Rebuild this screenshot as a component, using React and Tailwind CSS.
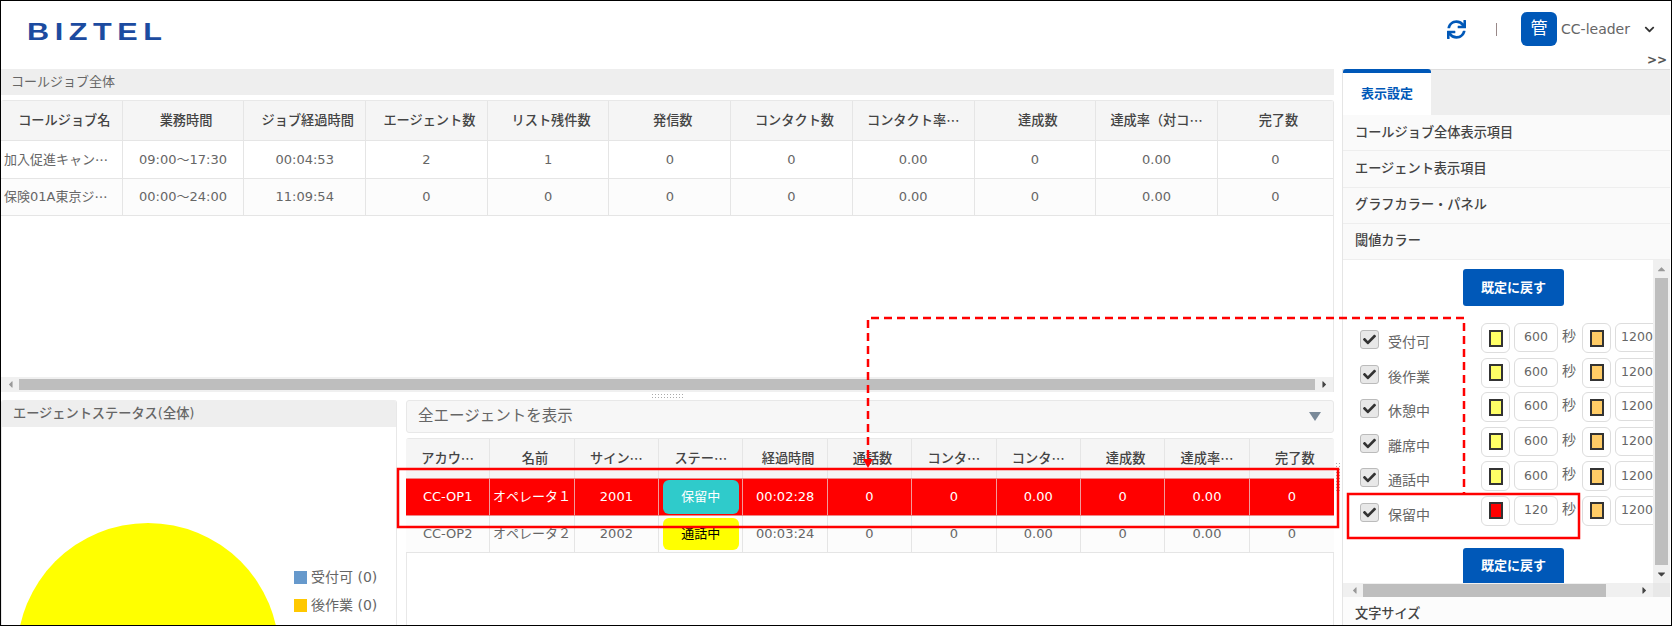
import { FaSync, FaChevronDown, FaCheck, FaCaretLeft, FaCaretRight, FaCaretUp, FaCaretDown } from 'react-icons/fa';

const jobHeaders = [
  { t: 'コールジョブ名' }, { t: '業務時間' }, { t: 'ジョブ経過時間' }, { t: 'エージェント数' }, { t: 'リスト残件数' }, { t: '発信数' },
  { t: 'コンタクト数' }, { t: 'コンタクト率', cut: true }, { t: '達成数' }, { t: '達成率（対コ', cut: true }, { t: '完了数' },
];

const jobRows = [
  { name: <>加入促進キャン<Dots /></>, bg: 'bg-white', cells: ['09:00～17:30', '00:04:53', '2', '1', '0', '0', '0.00', '0', '0.00', '0'] },
  { name: <>保険01A東京ジ<Dots /></>, bg: 'bg-[#fcfcfc]', cells: ['00:00～24:00', '11:09:54', '0', '0', '0', '0', '0.00', '0', '0.00', '0'] },
];

const agentHeaders = [
  { t: 'アカウ', cut: true }, { t: '名前' }, { t: 'サイン', cut: true }, { t: 'ステー', cut: true }, { t: '経過時間' }, { t: '通話数' },
  { t: 'コンタ', cut: true }, { t: 'コンタ', cut: true }, { t: '達成数' }, { t: '達成率', cut: true }, { t: '完了数' },
];

const settingItems = ['コールジョブ全体表示項目', 'エージェント表示項目', 'グラフカラー・パネル', '閾値カラー'];

const thresholds = [
  { label: '受付可', color: 'bg-[#ffff66]', secs: '600' },
  { label: '後作業', color: 'bg-[#ffff66]', secs: '600' },
  { label: '休憩中', color: 'bg-[#ffff66]', secs: '600' },
  { label: '離席中', color: 'bg-[#ffff66]', secs: '600' },
  { label: '通話中', color: 'bg-[#ffff66]', secs: '600' },
  { label: '保留中', color: 'bg-[#ff0000]', secs: '120' },
];

function Dots() {
  return <span className="font-['Noto_Sans_CJK_JP']">…</span>;
}

function HeaderCell({ h }) {
  return (
    <div className={`flex items-center justify-center border-r border-[#e5e5e5] text-[13.2px] font-medium whitespace-nowrap text-[#444] last:border-r-0 ${h.cut ? '' : 'pl-[6px]'}`}>
      {h.t}{h.cut && <Dots />}
    </div>
  );
}

function Swatch({ color }) {
  return (
    <div className="flex h-[30px] w-[29px] shrink-0 items-center justify-center rounded-md border border-[#ddd] bg-white">
      <div className={`h-[17px] w-[14px] border-2 border-[#333] ${color}`} />
    </div>
  );
}

function SecInput({ value, className }) {
  return (
    <div className={`flex h-[29px] shrink-0 items-center justify-center rounded-md border border-[#ddd] bg-white text-[12.5px] text-[#666] ${className}`}>
      {value}
    </div>
  );
}

function ThresholdRow({ row }) {
  return (
    <div className="flex h-[34.6px] shrink-0 items-start">
      <div className="mt-[7px] flex h-[19px] w-[19px] shrink-0 items-center justify-center rounded-[3px] border border-[#bbb] bg-[#e8e8e8] text-[#333]">
        <FaCheck size={13} />
      </div>
      <div className="mt-[9px] ml-[9px] w-[93px] shrink-0 text-[14px] text-[#666]">{row.label}</div>
      <Swatch color={row.color} />
      <SecInput value={row.secs} className="ml-[4px] w-[44px]" />
      <div className="ml-[4px] w-[16px] shrink-0 text-[14px] leading-[26px] text-[#666]">秒</div>
      <div className="ml-[4px]"><Swatch color="bg-[#ffcc66]" /></div>
      <SecInput value="1200" className="ml-[4px] w-[44px]" />
    </div>
  );
}

function JobTable() {
  return (
    <div className="mt-[5px] flex h-[292px] flex-col rounded-t-[3px] border-t border-r border-[#e8e8e8] bg-white">
      <div className="grid h-[40px] grid-cols-[repeat(10,121.7px)_1fr] border-b border-[#e5e5e5] bg-[#f5f5f5]">
        {jobHeaders.map((h, i) => <HeaderCell key={i} h={h} />)}
      </div>
      {jobRows.map((row, i) => (
        <div key={i} className={`grid h-[37.5px] grid-cols-[repeat(10,121.7px)_1fr] border-b border-[#e5e5e5] ${row.bg}`}>
          <div className="flex items-center overflow-hidden border-r border-[#e5e5e5] pl-[3px] text-[13px] whitespace-nowrap text-[#666]">{row.name}</div>
          {row.cells.map((c, j) => (
            <div key={j} className="flex items-center justify-center border-r border-[#e5e5e5] text-[13px] text-[#666] last:border-r-0">{c}</div>
          ))}
        </div>
      ))}
      <div className="flex-1" />
      <div className="flex h-[15px] items-center bg-[#f0f0f0] text-[#666]">
        <div className="flex w-[18px] shrink-0 justify-center"><FaCaretLeft size={11} color="#999" /></div>
        <div className="h-[11px] flex-1 bg-[#bebebe]" />
        <div className="flex w-[18px] shrink-0 justify-center"><FaCaretRight size={11} color="#444" /></div>
      </div>
    </div>
  );
}

function AgentTable() {
  const cols = ['CC-OP1', 'オペレータ１', '2001', null, '00:02:28', '0', '0', '0.00', '0', '0.00', '0'];
  const cols2 = ['CC-OP2', 'オペレータ２', '2002', null, '00:03:24', '0', '0', '0.00', '0', '0.00', '0'];
  return (
    <div className="mt-[5px] flex-1 rounded-t-[3px] border-t border-[#e8e8e8] bg-white shadow-[inset_1px_0_0_#e8e8e8,inset_-1px_0_0_#e8e8e8]">
      <div className="grid h-[39px] grid-cols-11 bg-[#f5f5f5]">
        {agentHeaders.map((h, i) => <HeaderCell key={i} h={h} />)}
      </div>
      <div className="grid h-[38px] grid-cols-11 border-y border-[#e88] bg-[#ff0000]">
        {cols.map((c, i) => (
          <div key={i} className="flex items-center justify-center border-r border-[#f29a9a] text-[13px] whitespace-nowrap text-white last:border-r-0">
            {c ?? <div className="flex h-[34px] w-[76px] items-center justify-center rounded-md bg-[#2fcbcb]">保留中</div>}
          </div>
        ))}
      </div>
      <div className="grid h-[37px] grid-cols-11 border-b border-[#e5e5e5] bg-[#fcfcfc]">
        {cols2.map((c, i) => (
          <div key={i} className="flex items-center justify-center border-r border-[#e5e5e5] text-[13px] whitespace-nowrap text-[#666] last:border-r-0">
            {c ?? <div className="flex h-[32px] w-[76px] items-center justify-center rounded-md bg-[#ffff00] text-black">通話中</div>}
          </div>
        ))}
      </div>
    </div>
  );
}

function SettingsPanel() {
  return (
    <div className="flex w-[328px] shrink-0 flex-col border-l border-[#e5e5e5]">
      <div className="flex h-[46px] shrink-0 border-t border-[#ddd] bg-[#eee]">
        <div className="-mt-px flex w-[88px] items-center justify-center rounded-t-[3px] border-t-4 border-[#0058b8] bg-white text-[13px] font-bold text-[#0058b8]">
          表示設定
        </div>
      </div>
      {settingItems.map((item) => (
        <div key={item} className="flex h-[36.25px] shrink-0 items-center border-b border-[#eee] bg-[#fafafa] pl-[12px] text-[13.2px] font-medium text-[#444]">
          {item}
        </div>
      ))}
      <div className="flex h-[337px] shrink-0 flex-col">
        <div className="flex min-h-0 flex-1">
          <div className="min-w-0 flex-1 overflow-hidden pl-[17px]">
            <button className="mt-[9px] ml-[103px] block h-[37px] w-[101px] rounded-[3px] bg-[#0058b8] text-[13px] font-bold text-white">
              既定に戻す
            </button>
            <div className="mt-[17px] flex flex-col">
              {thresholds.map((row) => <ThresholdRow key={row.label} row={row} />)}
            </div>
            <button className="mt-[17px] ml-[103px] block h-[37px] w-[101px] rounded-t-[3px] bg-[#0058b8] text-[13px] font-bold text-white">
              既定に戻す
            </button>
          </div>
          <div className="flex w-[17px] shrink-0 flex-col items-center bg-[#f0f0f0]">
            <FaCaretUp size={11} color="#999" className="mt-[3px] h-[12px] shrink-0" />
            <div className="mt-[3px] w-[13px] flex-1 bg-[#bebebe]" />
            <FaCaretDown size={11} color="#444" className="my-[3px] h-[12px] shrink-0" />
          </div>
        </div>
        <div className="flex h-[14px] shrink-0 items-center bg-[#f0f0f0] pl-[3px]">
          <div className="flex w-[17px] justify-center"><FaCaretLeft size={11} color="#999" /></div>
          <div className="h-[13px] w-[243px] bg-[#bebebe]" />
          <div className="ml-[30px] flex w-[17px] justify-center"><FaCaretRight size={11} color="#444" /></div>
          <div className="ml-auto h-[14px] w-[17px] bg-[#e8e8e8]" />
        </div>
      </div>
      <div className="flex h-[28px] items-center bg-[#fcfcfc] pt-[6px] pl-[12px] text-[13.2px] font-medium text-[#444]">文字サイズ</div>
    </div>
  );
}

export default function App() {
  return (
    <div className="relative h-[626px] w-[1672px] overflow-hidden bg-white font-['DejaVu_Sans','Noto_Sans_CJK_JP',sans-serif]">
      <div className="flex h-full w-full flex-col overflow-hidden border border-black">
        {/* header */}
        <div className="relative flex h-[68px] shrink-0 items-start justify-between">
          <div className="mt-[17px] ml-[26px] origin-left scale-x-[1.33] font-['Liberation_Sans'] text-[23px] leading-[28px] font-bold tracking-[4.2px] text-[#1c4ba0]">
            BIZTEL
          </div>
          <div className="mt-[11px] flex items-center">
            <FaSync size={19} color="#0058b8" />
            <div className="ml-[30px] h-[13px] w-px bg-[#998888]" />
            <div className="ml-[24px] flex h-[34px] w-[36px] items-center justify-center rounded-md bg-[#0058b8] text-[17px] text-white">管</div>
            <div className="ml-[4px] text-[14px] text-[#666]">CC-leader</div>
            <FaChevronDown size={11} color="#333" className="mr-[16px] ml-[14px]" />
          </div>
          <div className="absolute right-0 bottom-[2px] w-[24px] text-[12px] leading-[14px] font-bold whitespace-nowrap text-[#555]">&gt;&gt;</div>
        </div>

        <div className="flex min-h-0 flex-1">
          <div className="flex w-[1333px] shrink-0 flex-col">
            <div className="flex h-[26px] shrink-0 items-center bg-[#eee] pl-[10px] text-[13px] text-[#666]">コールジョブ全体</div>
            <JobTable />
            {/* splitter */}
            <div className="flex h-[8px] shrink-0 items-center justify-center">
              <div className="h-[6px] w-[33px] bg-[radial-gradient(#aaa_1px,transparent_1px)] bg-[length:3px_3px]" />
            </div>
            <div className="flex min-h-0 flex-1 gap-[9px]">
              <div className="w-[396px] shrink-0 overflow-hidden rounded-t-[3px] border-x border-[#e8e8e8]">
                <div className="flex h-[27px] items-center bg-[#eee] pl-[11px] text-[13.2px] font-medium text-[#666]">エージェントステータス(全体)</div>
                <div className="flex items-start">
                  <svg className="mt-[96px] ml-[15px] shrink-0" width="262" height="262" viewBox="0 0 262 262">
                    <circle cx="131" cy="131" r="131" fill="#ffff00" />
                  </svg>
                  <div className="mt-[143px] ml-[15px] flex flex-col gap-[14px] text-[14px] leading-[14px] whitespace-nowrap text-[#666]">
                    <div className="flex items-center gap-[4px]"><div className="h-[13px] w-[13px] bg-[#6699cc]" />受付可 (0)</div>
                    <div className="flex items-center gap-[4px]"><div className="h-[13px] w-[13px] bg-[#ffc800]" />後作業 (0)</div>
                  </div>
                </div>
              </div>
              <div className="flex min-w-0 flex-1 flex-col">
                <div className="flex h-[33px] shrink-0 items-center justify-between rounded-[3px] border border-[#e8e8e8] bg-[#f7f7f7] pr-[12px] pl-[11px] text-[15.5px] text-[#666]">
                  全エージェントを表示
                  <svg width="12" height="9" viewBox="0 0 12 9"><path d="M0 0h12L6 9z" fill="#7a8a99" /></svg>
                </div>
                <AgentTable />
              </div>
            </div>
          </div>
          {/* vertical splitter */}
          <div className="w-[8px] shrink-0 pt-[393px] pl-[1px]">
            <div className="h-[30px] w-[6px] bg-[radial-gradient(#aaa_1px,transparent_1px)] bg-[length:3px_3px]" />
          </div>
          <SettingsPanel />
        </div>
      </div>

      {/* red annotation overlay */}
      <svg className="pointer-events-none absolute top-0 left-0" width="1672" height="626" fill="none">
        <rect x="398" y="469" width="940" height="58" stroke="#ff0000" strokeWidth="2.5" />
        <rect x="1348" y="494" width="231" height="44" stroke="#ff0000" strokeWidth="2.5" />
        <path d="M868 458V318H1464V493" stroke="#ff0000" strokeWidth="2.5" strokeDasharray="8 5" />
        <path d="M863 459h10l-5 9z" fill="#ff0000" />
      </svg>
    </div>
  );
}
